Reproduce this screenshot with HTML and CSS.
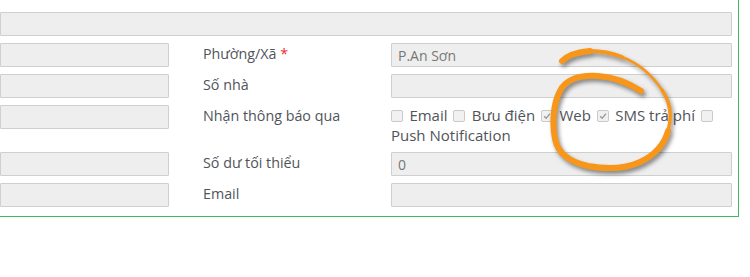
FILE: index.html
```html
<!DOCTYPE html>
<html lang="vi">
<head>
<meta charset="utf-8">
<link rel="stylesheet" href="styles.css">
</head>
<body>
<div class="page">
  <div class="panel">
    <input class="field" type="text" readonly>
    <div class="form">
      <input class="field" type="text" readonly>
      <div class="label">Phường/Xã <span class="req">*</span></div>
      <input class="field" type="text" value="P.An Sơn" readonly>

      <input class="field" type="text" readonly>
      <div class="label">Số nhà</div>
      <input class="field" type="text" readonly>

      <input class="field" type="text" readonly>
      <div class="label">Nhận thông báo qua</div>
      <div class="checks"><span class="cb"></span> Email <span class="cb"></span> Bưu điện <span class="cb on"><svg viewBox="0 0 12 12"><path d="M2.5 6.2 L5 8.6 L9.6 3.2"/></svg></span> Web <span class="cb on"><svg viewBox="0 0 12 12"><path d="M2.5 6.2 L5 8.6 L9.6 3.2"/></svg></span> SMS trả phí <span class="cb"></span> Push Notification</div>

      <input class="field" type="text" readonly>
      <div class="label">Số dư tối thiểu</div>
      <input class="field" type="text" value="0" readonly>

      <input class="field" type="text" readonly>
      <div class="label">Email</div>
      <input class="field" type="text" readonly>
    </div>
  </div>
  <svg class="mark" viewBox="0 0 750 277" width="750" height="277">
    <g fill="none" stroke="#f8961a" stroke-linecap="round" stroke-linejoin="round">
      <path stroke-width="6" d="M641,92 C630,85 615,78 598,77 C580,76 566,80 560,92 C553,105 552,125 555,140 C558,155 570,163 588,167 C605,170 625,170 640,163 C655,156 664,146 668,132"/>
      <path stroke-width="3.5" d="M668,132 C672,118 671,104 662,91"/>
      <path stroke-width="2.5" d="M662,91 C652,76 638,64 622,58"/>
      <path stroke-width="4" d="M622,58 C612,54 602,52 590,52"/>
      <path stroke-width="6" d="M590,52 C578,53 568,56 562,62"/>
    </g>
  </svg>
</div>
</body>
</html>
```

FILE: styles.css
```css
html, body {
  margin: 0;
  padding: 0;
  background: #fff;
}

body {
  width: 750px;
  height: 277px;
  overflow: hidden;
  font-family: "Open Sans", "Liberation Sans", sans-serif;
  font-size: 14px;
  color: #555;
}

.page {
  position: relative;
  width: 750px;
  height: 277px;
}

.panel {
  box-sizing: border-box;
  width: 740px;
  margin: -1px 0 0 -1px;
  padding: 12px 6px 9px 0;
  border: 1px solid #3cba5e;
  display: flex;
  flex-direction: column;
  gap: 7px;
}

.field {
  box-sizing: border-box;
  display: block;
  width: 100%;
  height: 24px;
  margin: 0;
  padding: 0 6px;
  border: 1px solid #cfcfcf;
  border-radius: 1px;
  background: #eee;
  font-family: "Open Sans", "Liberation Sans", sans-serif;
  font-size: 14px;
  color: #777;
  outline: none;
}

.form {
  display: grid;
  grid-template-columns: 169px 222px 341px;
  row-gap: 7px;
  align-items: start;
}

.label {
  padding: 1px 0 0 34px;
  line-height: 19px;
  font-size: 14.3px;
  color: #50545a;
}

.req {
  color: #e8322f;
}

.checks {
  line-height: 20px;
  font-size: 15px;
  color: #50545a;
}

.cb {
  box-sizing: border-box;
  display: inline-block;
  width: 12px;
  height: 12px;
  margin: 0 2.5px 0 2px;
  border: 1px solid #cacaca;
  border-radius: 2px;
  background: #f1f1f1;
  vertical-align: -1px;
}

.cb:first-child {
  margin-left: 0;
}

.cb svg {
  display: block;
  width: 10px;
  height: 10px;
}

.cb svg path {
  fill: none;
  stroke: #9a9a9a;
  stroke-width: 1.6;
}

.mark {
  position: absolute;
  left: 0;
  top: 0;
  pointer-events: none;
  filter: drop-shadow(2px 3px 2px rgba(0, 0, 0, 0.45));
}
```
